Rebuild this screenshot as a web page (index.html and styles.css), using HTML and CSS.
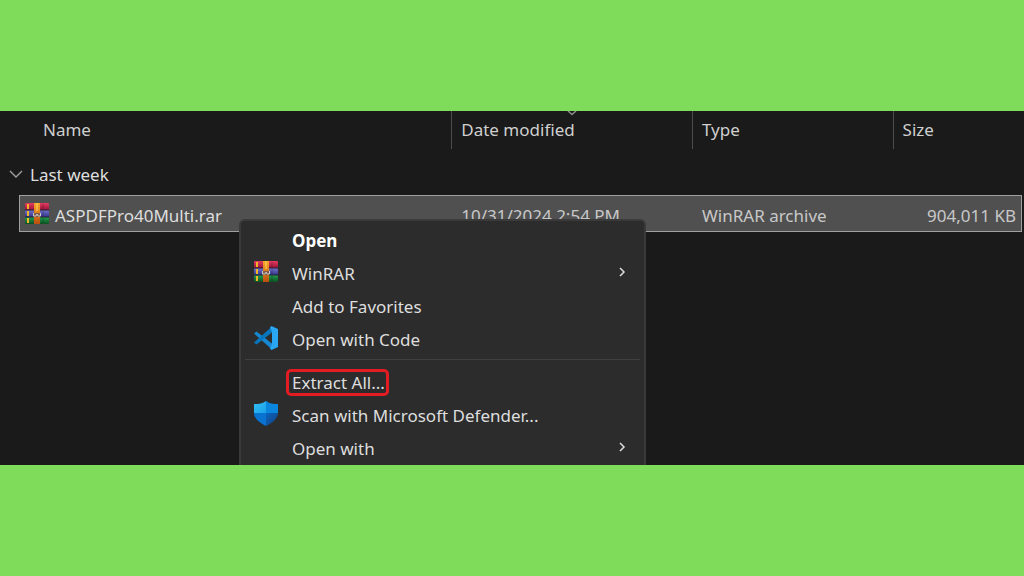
FILE: index.html
```html
<!DOCTYPE html>
<html lang="en">
<head>
<meta charset="utf-8">
<meta name="viewport" content="width=device-width, initial-scale=1">
<title>File Explorer</title>
<link rel="stylesheet" href="styles.css">
</head>
<body>
<svg class="sprite" aria-hidden="true">
  <defs>
    <linearGradient id="red" x1="0" y1="0" x2="0" y2="1"><stop offset="0" stop-color="#e63c60"/><stop offset="1" stop-color="#98123a"/></linearGradient>
    <linearGradient id="blue" x1="0" y1="0" x2="0" y2="1"><stop offset="0" stop-color="#7474cc"/><stop offset="1" stop-color="#33348c"/></linearGradient>
    <linearGradient id="green" x1="0" y1="0" x2="0" y2="1"><stop offset="0" stop-color="#23a050"/><stop offset="1" stop-color="#0b5020"/></linearGradient>
    <linearGradient id="strap" x1="0" y1="0" x2="0" y2="1"><stop offset="0" stop-color="#f2a72c"/><stop offset=".55" stop-color="#d9781a"/><stop offset="1" stop-color="#b84e10"/></linearGradient>
    <linearGradient id="shield-light" x1="0" y1="0" x2="1" y2="1"><stop offset="0" stop-color="#35c0f4"/><stop offset="1" stop-color="#1aa0ea"/></linearGradient>
    <linearGradient id="shield-dark" x1="0" y1="0" x2="1" y2="1"><stop offset="0" stop-color="#0c64c0"/><stop offset="1" stop-color="#12407f"/></linearGradient>
    <symbol id="books" viewBox="0 0 24 22">
      <rect y="0" width="24" height="7" rx="1" fill="url(#red)"/>
      <rect y="7" width="24" height="7" rx="1" fill="url(#blue)"/>
      <rect y="14" width="24" height="7" rx="1" fill="url(#green)"/>
      <path d="M0 7h24M0 14h24" stroke="#26202c" stroke-width="1"/>
      <path d="M3 1v5M3 8v5M3 15v5" stroke="#f2b526" stroke-width="2"/>
      <path d="M18 1v5M18 8v5M18 15v5" stroke="#000" stroke-opacity=".12" stroke-width="2"/>
      <rect x="9" y="0" width="6" height="21" fill="url(#strap)"/>
      <path d="M12 0v8" stroke="#ffd45d" stroke-width="1"/>
      <rect x="8" y="10" width="8" height="4" rx="2" fill="#7a5a48"/>
      <path d="M8.500 10v3h2.500l1-2 1 2h2.500v-3" fill="none" stroke="#d0c8c4" stroke-width="1"/>
    </symbol>
    <symbol id="chevron" viewBox="0 0 8 12"><path d="M2 2l4 4-4 4" fill="none" stroke="#dedede" stroke-width="1.500"/></symbol>
  </defs>
</svg>
<main class="explorer">
  <table class="files">
    <colgroup><col class="col-name"><col class="col-date"><col class="col-type"><col class="col-size"></colgroup>
    <thead>
      <tr>
        <th scope="col" class="name-head">Name</th>
        <th scope="col" class="sorted">Date modified<svg class="sort" viewBox="0 0 10 5" aria-hidden="true"><path d="M1 0l4 3.500L9 0" fill="none" stroke="#8a8a8a" stroke-width="1.500"/></svg></th>
        <th scope="col">Type</th>
        <th scope="col">Size</th>
      </tr>
    </thead>
    <tbody>
      <tr class="group">
        <td colspan="4"><button class="group-toggle" type="button" aria-expanded="true"><svg width="14" height="10" viewBox="0 0 14 10" aria-hidden="true"><path d="M1 1l6 6 6-6" fill="none" stroke="#a2a2a2" stroke-width="1.300"/></svg>Last week</button></td>
      </tr>
      <tr class="selected">
        <td><span class="file"><svg class="books" aria-hidden="true"><use href="#books"/></svg><span class="file-name">ASPDFPro40Multi.rar</span></span></td>
        <td>10/31/2024 2:54 PM</td>
        <td>WinRAR archive</td>
        <td class="size">904,011 KB</td>
      </tr>
    </tbody>
  </table>
  <div class="menu" role="menu">
    <button class="item default" type="button" role="menuitem"><span class="icon"></span><span>Open</span></button>
    <button class="item" type="button" role="menuitem"><span class="icon"><svg class="books" aria-hidden="true"><use href="#books"/></svg></span><span>WinRAR</span><svg class="more" aria-hidden="true"><use href="#chevron"/></svg></button>
    <button class="item" type="button" role="menuitem"><span class="icon"></span><span>Add to Favorites</span></button>
    <button class="item" type="button" role="menuitem"><span class="icon"><svg width="24" height="24" viewBox="0 0 24 24" aria-hidden="true"><path d="M0 7.500L2.500 5.500 18 17.500v6z" fill="#1687d0"/><path d="M0 16.500l2.500 2L18 6.500v-6z" fill="#0876bd"/><path d="M17.500 0L24 3v18l-6.500 3-1.500-1.500 2-4.500V6l-2-4.500z" fill="#2aa7f3"/></svg></span><span>Open with Code</span></button>
    <hr>
    <button class="item" type="button" role="menuitem"><span class="icon"></span><span class="marked">Extract All...</span></button>
    <button class="item" type="button" role="menuitem"><span class="icon"><svg width="24" height="25" viewBox="0 0 24 25" aria-hidden="true"><path d="M12 0C9 2.500 5 3 0 3v9h12z" fill="url(#shield-light)"/><path d="M12 0c3 2.500 7 3 12 3v9H12z" fill="#0a86df"/><path d="M0 12h12v13C5 21.500 0 17.500 0 12z" fill="#0873d1"/><path d="M24 12H12v13c7-3.500 12-7.500 12-13z" fill="url(#shield-dark)"/></svg></span><span>Scan with Microsoft Defender...</span></button>
    <button class="item" type="button" role="menuitem"><span class="icon"></span><span>Open with</span><svg class="more" aria-hidden="true"><use href="#chevron"/></svg></button>
  </div>
</main>
</body>
</html>
```
FILE: styles.css
```css
* { box-sizing: border-box; }

body {
  margin: 0;
  min-height: 100vh;
  padding: 111px 0;
  display: grid;
  background: #7fdb5a;
  color: #dedede;
  font: 17px/24px "Noto Sans", "Open Sans", sans-serif;
}

button {
  border: 0;
  padding: 0;
  background: none;
  color: inherit;
  font: inherit;
  text-align: left;
}

.sprite { position: absolute; width: 0; height: 0; }

.explorer {
  position: relative;
  overflow: hidden;
  padding: 0 2px 0 19px;
  background: #1a1a1a;
}

.files {
  width: 100%;
  table-layout: fixed;
  border-collapse: separate;
  border-spacing: 0;
}

.col-name { width: 43.1%; }
.col-date { width: 24%; }
.col-type { width: 20%; }

th, td {
  padding: 0 0 0 10px;
  text-align: left;
  white-space: nowrap;
}

th {
  height: 38px;
  border-left: 1px solid #4c4c4c;
  padding-left: 9px;
  font-weight: 400;
  color: #cfcfcf;
}

.name-head { border-left: 0; padding-left: 24px; }
.sorted { position: relative; }
.sort { position: absolute; top: 0; left: 48%; width: 10px; height: 5px; }

.group td { height: 46px; padding: 5px 0 0; }
.group-toggle { display: flex; align-items: center; gap: 7px; margin-left: -10px; }

.selected { background: #505050; outline: 1px solid #a0a0a0; outline-offset: -1px; }
.selected td { height: 37px; padding-top: 4px; color: #c8c8c8; }
.selected td:first-child { padding: 0 0 0 6px; color: #dedede; }
.file { display: flex; align-items: center; gap: 6px; }
.file-name { padding-top: 4px; }
.books { width: 24px; height: 22px; }
.selected .size { padding-right: 6px; text-align: right; }

.menu {
  position: absolute;
  top: 108px;
  left: 239px;
  width: 407px;
  padding: 3px 4px;
  border: 2px solid #3a3a3a;
  border-radius: 6px;
  background: #2c2c2c;
}

.item {
  display: flex;
  align-items: center;
  width: 100%;
  height: 33px;
  padding: 0 14px 0 9px;
}

.default { font-weight: 700; color: #fff; }
.icon { flex: none; display: flex; width: 38px; padding-bottom: 4px; }
.more { width: 8px; height: 12px; margin: 0 0 4px auto; }

.menu hr {
  margin: 3px 0 6px;
  border: 0;
  border-top: 1px solid #404040;
}

.marked {
  margin-left: -6px;
  padding: 0 1px 0 3px;
  border: 3px solid #e31b23;
  border-radius: 5px;
  line-height: 21px;
}
```
